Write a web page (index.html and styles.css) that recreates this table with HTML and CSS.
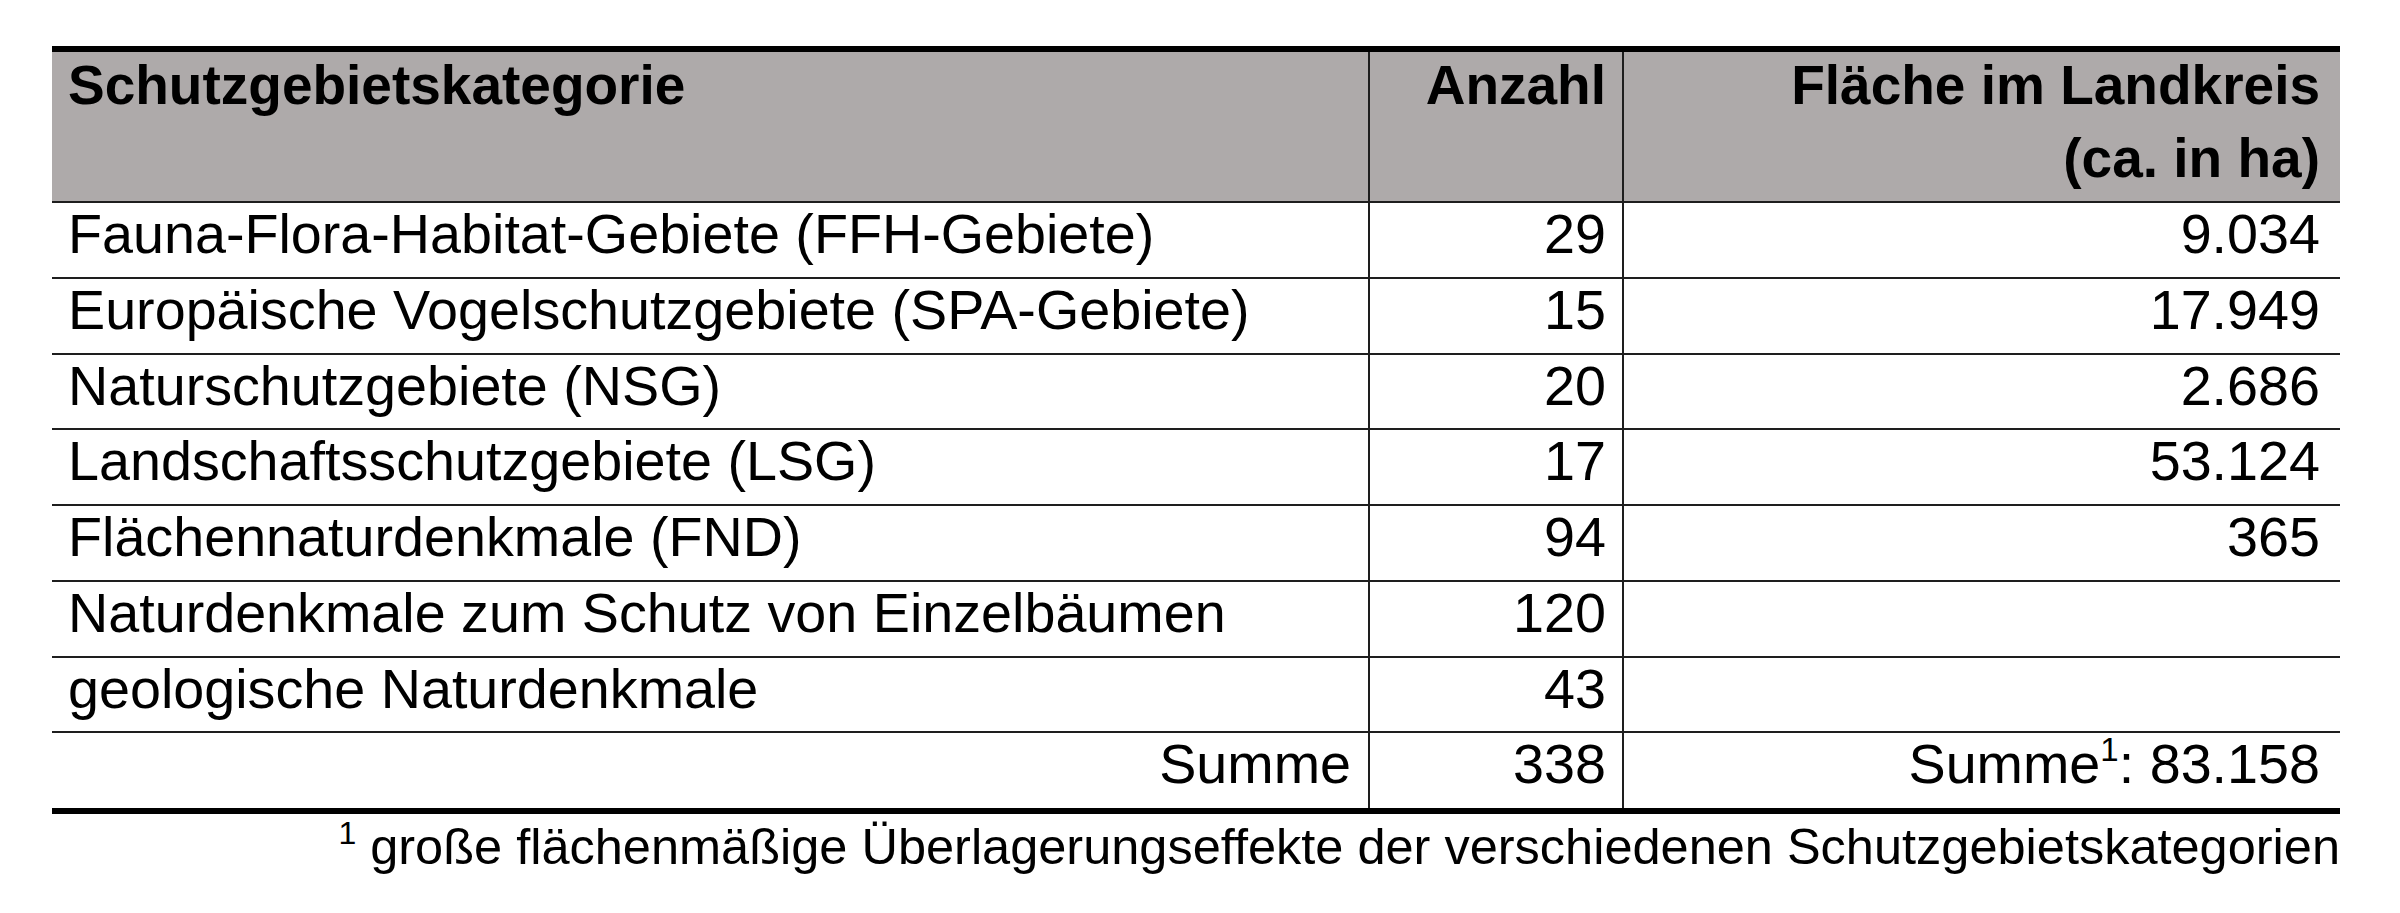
FILE: index.html
```html
<!DOCTYPE html>
<html lang="de">
<head>
<meta charset="utf-8">
<title>Schutzgebiete im Landkreis</title>
<link rel="stylesheet" href="styles.css">
</head>
<body>
<div class="wrap">
  <table class="areas">
    <thead>
      <tr>
        <th class="c1"><span class="hl1">Schutzgebietskategorie</span></th>
        <th class="c2 num"><span class="hl1">Anzahl</span></th>
        <th class="c3 num"><span class="hl1">Fläche im Landkreis</span><span class="hl2">(ca. in ha)</span></th>
      </tr>
    </thead>
    <tbody>
      <tr><td class="c1">Fauna-Flora-Habitat-Gebiete (FFH-Gebiete)</td><td class="c2 num">29</td><td class="c3 num">9.034</td></tr>
      <tr><td class="c1">Europäische Vogelschutzgebiete (SPA-Gebiete)</td><td class="c2 num">15</td><td class="c3 num">17.949</td></tr>
      <tr><td class="c1">Naturschutzgebiete (NSG)</td><td class="c2 num">20</td><td class="c3 num">2.686</td></tr>
      <tr><td class="c1">Landschaftsschutzgebiete (LSG)</td><td class="c2 num">17</td><td class="c3 num">53.124</td></tr>
      <tr><td class="c1">Flächennaturdenkmale (FND)</td><td class="c2 num">94</td><td class="c3 num">365</td></tr>
      <tr><td class="c1">Naturdenkmale zum Schutz von Einzelbäumen</td><td class="c2 num">120</td><td class="c3 num"></td></tr>
      <tr><td class="c1">geologische Naturdenkmale</td><td class="c2 num">43</td><td class="c3 num"></td></tr>
      <tr class="total"><td class="c1 num">Summe</td><td class="c2 num">338</td><td class="c3 num">Summe<sup class="fn">1</sup>: 83.158</td></tr>
    </tbody>
  </table>
  <p class="footnote"><sup class="fn-small">1</sup> große flächenmäßige Überlagerungseffekte der verschiedenen Schutzgebietskategorien</p>
</div>
</body>
</html>
```

FILE: styles.css
```css
html, body {
  margin: 0;
  padding: 0;
  background: #ffffff;
}

body {
  font-family: "Liberation Sans", Arial, sans-serif;
  color: #000000;
}

.wrap {
  padding: 46px 0 0 52px;
  width: 2288px;
}

.areas {
  width: 2288px;
  table-layout: fixed;
  border-collapse: separate;
  border-spacing: 0;
  border-top: 6px solid #000000;
  border-bottom: 6px solid #000000;
  font-size: 55.7px;
}

.areas th,
.areas td {
  box-sizing: border-box;
  vertical-align: top;
  text-align: left;
  white-space: nowrap;
  border-bottom: 2px solid #1e1e1e;
}

.areas th {
  background: #aeaaaa;
  font-size: 55px;
  font-weight: bold;
  padding: 0 17px 3px 16px;
}

.areas td {
  font-weight: normal;
  line-height: 62px;
  padding: 0 17px 11.75px 16px;
}

.areas .c1 { width: 1316px; }
.areas .c2 { width: 254px; border-left: 2px solid #1e1e1e; padding-right: 16px; }
.areas .c3 { width: 718px; border-left: 2px solid #1e1e1e; padding-right: 20px; }

.areas .num { text-align: right; }

.hl1 {
  display: block;
  line-height: 66px;
}

.hl2 {
  display: block;
  line-height: 80px;
}

.areas tr.total td {
  border-bottom: none;
  padding-bottom: 12.75px;
}

.fn {
  font-size: 33px;
  line-height: 0;
  vertical-align: 22px;
}

.footnote {
  margin: 2.5px 0 0 0;
  width: 2288px;
  text-align: right;
  font-size: 50.5px;
  line-height: normal;
}

.fn-small {
  font-size: 32px;
  line-height: 0;
  vertical-align: 20px;
}
```
